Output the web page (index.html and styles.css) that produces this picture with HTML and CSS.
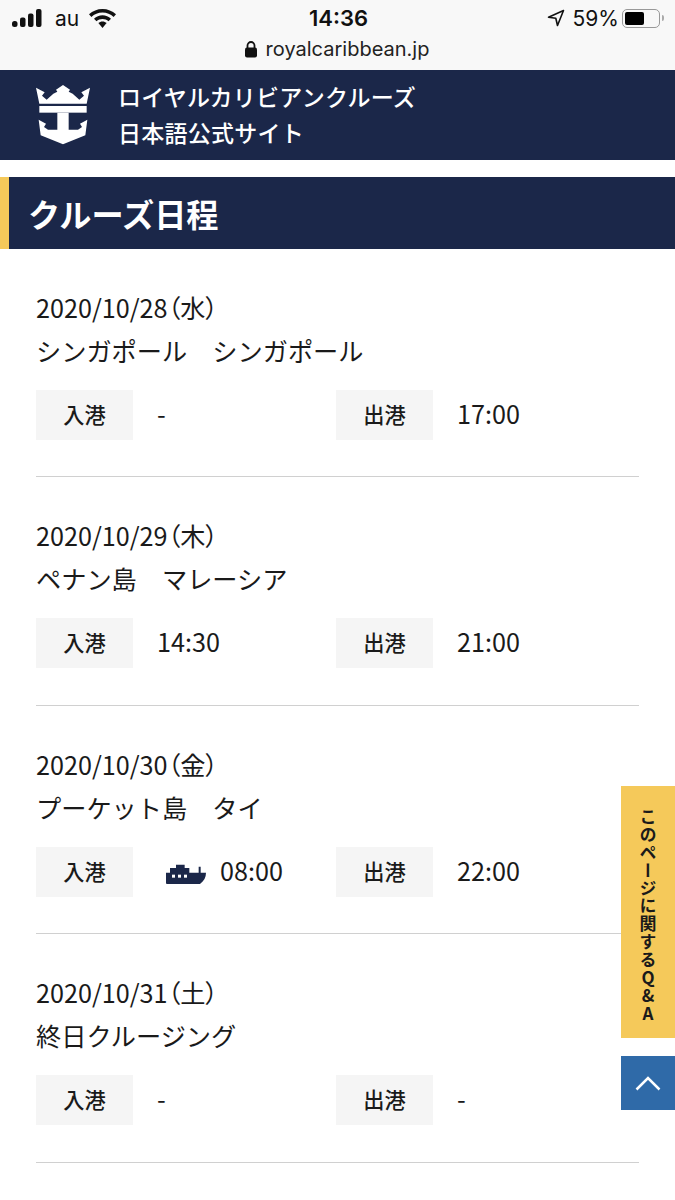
FILE: index.html
```html
<!DOCTYPE html>
<html lang="ja">
<head>
  <meta charset="UTF-8" />
  <meta name="viewport" content="width=device-width, initial-scale=1.0" />
  <title>クルーズ日程</title>
  <link rel="stylesheet" href="styles.css">
</head>
<body>
  <div class="browser-bar">
    <div class="status">
      <div class="status-left">
        <svg class="signal" width="30" height="18" viewBox="0 0 30 18">
          <rect x="0" y="12" width="5.5" height="6" rx="2.5" />
          <rect x="8" y="8.5" width="5.5" height="9.5" rx="2" />
          <rect x="16" y="4.5" width="5.5" height="13.500" rx="2" />
          <rect x="24" y="0" width="5.5" height="18" rx="2" />
        </svg>
        <span>au</span>
        <svg class="wifi" width="27" height="19" viewBox="0 0 27 19">
          <path d="M13.500 0C8.300 0 3.700 2 0 5.300L2.400 8C5.400 5.200 9.200 3.600 13.500 3.600S21.600 5.200 24.600 8L27 5.300C23.300 2 18.700 0 13.500 0Z" />
          <path d="M13.500 6.300C10.300 6.300 7.300 7.500 5 9.700L7.500 12.300C9.100 10.800 11.200 10 13.500 10S17.900 10.800 19.500 12.300L22 9.700C19.700 7.500 16.700 6.300 13.500 6.300Z" />
          <path d="M13.500 12.500C11.900 12.500 10.500 13.100 9.400 14.100L13.500 19L17.600 14.100C16.500 13.100 15.100 12.500 13.500 12.500Z" />
        </svg>
      </div>
      <div class="status-time">14:36</div>
      <div class="status-right">
        <svg class="locate" width="18" height="18" viewBox="0 0 18 18">
          <path d="M16.500 1.500L1.500 8.200L8.800 9.300L10.500 16.500Z" />
        </svg>
        <span>59%</span>
        <div class="battery"><div class="battery-level"></div></div>
      </div>
    </div>
    <div class="address">
      <svg width="14" height="17" viewBox="0 0 14 17">
        <path d="M3.500 7V4.500a3.500 3.500 0 0 1 7 0V7" fill="none" stroke="#111" stroke-width="1.800" />
        <rect x="1" y="6.500" width="12" height="10" rx="2" fill="#111" />
      </svg>
      <span>royalcaribbean.jp</span>
    </div>
  </div>

  <header class="site-header">
    <svg class="logo" width="54" height="60" viewBox="18 14 162 180">
      <path d="M18 22L44 36L36 46L50 58L70 40L82 34L78 28L99 14L120 28L116 34L128 40L148 58L162 46L154 36L180 22L170 70H28Z" />
      <rect x="28" y="77" width="142" height="20" />
      <path d="M26 118L48 130L42 140L54 148H82V97H116V148H144L156 140L150 130L172 118L166 165L99 192L32 165Z" />
    </svg>
    <div class="site-name">ロイヤルカリビアンクルーズ<br>日本語公式サイト</div>
  </header>

  <h1 class="page-title">クルーズ日程</h1>

  <div class="schedule">
    <div class="day">
      <div class="date">2020/10/28<span class="wday">（水）</span></div>
      <div class="place">シンガポール　シンガポール</div>
      <div class="times">
        <div class="time-cell"><div class="time-label">入港</div><div class="time-value">-</div></div>
        <div class="time-cell"><div class="time-label">出港</div><div class="time-value">17:00</div></div>
      </div>
    </div>
    <div class="day">
      <div class="date">2020/10/29<span class="wday">（木）</span></div>
      <div class="place">ペナン島　マレーシア</div>
      <div class="times">
        <div class="time-cell"><div class="time-label">入港</div><div class="time-value">14:30</div></div>
        <div class="time-cell"><div class="time-label">出港</div><div class="time-value">21:00</div></div>
      </div>
    </div>
    <div class="day">
      <div class="date">2020/10/30<span class="wday">（金）</span></div>
      <div class="place">プーケット島　タイ</div>
      <div class="times">
        <div class="time-cell">
          <div class="time-label">入港</div>
          <div class="time-value">
            <svg class="ship" width="40" height="24" viewBox="0 0 120 72">
              <path d="M30 14H56V24H70V38H98V20H104V38H120C120 52 114 62 102 72H3C1 72 0 71 0 69V38H12V24H30Z" />
              <rect x="18" y="44" width="9" height="9" fill="#fff" />
              <rect x="36" y="44" width="9" height="9" fill="#fff" />
              <rect x="54" y="44" width="9" height="9" fill="#fff" />
            </svg>
            <span>08:00</span>
          </div>
        </div>
        <div class="time-cell"><div class="time-label">出港</div><div class="time-value">22:00</div></div>
      </div>
    </div>
    <div class="day">
      <div class="date">2020/10/31<span class="wday">（土）</span></div>
      <div class="place">終日クルージング</div>
      <div class="times">
        <div class="time-cell"><div class="time-label">入港</div><div class="time-value">-</div></div>
        <div class="time-cell"><div class="time-label">出港</div><div class="time-value">-</div></div>
      </div>
    </div>
  </div>

  <a class="qa-tab">このページに関するQ&amp;A</a>
  <a class="top-btn">
    <svg width="26" height="16" viewBox="0 0 26 16">
      <path d="M1.500 14.500L13 3L24.500 14.500" fill="none" stroke="#fff" stroke-width="2.500" />
    </svg>
  </a>
</body>
</html>
```

FILE: styles.css
```css
body {
  font-family: "Noto Sans CJK JP", "Noto Sans", sans-serif;
  color: #1a1a1a;
  background: #fff;
  margin: 0;
  padding: 0;
  height: 1200px;
  overflow: hidden;
  position: relative;
}
.browser-bar {
  background: #f8f8f8;
  height: 70px;
  font-family: Inter, "Liberation Sans", sans-serif;
  color: #111;
}
.status {
  display: grid;
  grid-template-columns: 1fr auto 1fr;
  align-items: center;
  height: 36px;
  padding: 0 10px 0 12px;
  font-size: 21px;
}
.status-left {
  display: flex;
  align-items: center;
  gap: 13px;
}
.status-left svg {
  fill: #111;
}
.status-left .wifi {
  margin-left: -3px;
}
.status-time {
  font-size: 22px;
  font-weight: 600;
}
.status-right {
  display: flex;
  align-items: center;
  justify-content: flex-end;
  gap: 6px;
}
.locate {
  fill: none;
  stroke: #111;
  stroke-width: 1.600;
  stroke-linejoin: round;
  margin-right: 2px;
}
.battery {
  width: 38px;
  height: 19px;
  border: 1.500px solid #999;
  border-radius: 5px;
  padding: 2px;
  box-sizing: border-box;
  margin: 0 5px 0 -3px;
  position: relative;
}
.battery:after {
  content: "";
  position: absolute;
  right: -5px;
  top: 5px;
  width: 2px;
  height: 6px;
  background: #aaa;
  border-radius: 0 2px 2px 0;
}
.battery-level {
  width: 59%;
  height: 100%;
  background: #000;
  border-radius: 2px;
}
.address {
  display: flex;
  justify-content: center;
  align-items: center;
  gap: 8px;
  font-size: 20px;
  color: #222;
  height: 26px;
  padding-right: 2px;
}
.site-header {
  background: #1b2749;
  height: 90px;
  display: flex;
  align-items: center;
  padding-left: 36px;
  gap: 28px;
}
.logo {
  fill: #fff;
}
.site-name {
  color: #fff;
  font-size: 23px;
  font-weight: 500;
  letter-spacing: 0.250px;
  line-height: 36px;
  margin-top: -3px;
}
.page-title {
  margin: 17px 0 0;
  height: 72px;
  line-height: 72px;
  background: #1b2749;
  border-left: 9px solid #f5c95a;
  padding-left: 19px;
  color: #fff;
  font-size: 32.200px;
  font-weight: 700;
}
.schedule {
  padding: 0 36px;
}
.day {
  padding: 37px 0 36.400px;
  border-bottom: 1px solid #d0d0d0;
}
.date, .place {
  font-size: 25.200px;
  line-height: 43px;
}
.wday {
  font-feature-settings: "palt";
}
.times {
  display: grid;
  grid-template-columns: 300px 1fr;
  margin-top: 18px;
}
.time-cell {
  display: flex;
  align-items: center;
}
.time-label {
  width: 97px;
  height: 50px;
  line-height: 48px;
  background: #f5f5f5;
  text-align: center;
  font-size: 21.200px;
  font-weight: 500;
}
.time-value {
  display: flex;
  align-items: center;
  gap: 14px;
  padding: 0 0 4px 24px;
  font-size: 25.200px;
}
.ship {
  fill: #1b2749;
  margin-left: 9px;
  margin-top: 4px;
}
.qa-tab {
  position: absolute;
  right: 0;
  top: 786px;
  width: 54px;
  height: 252px;
  box-sizing: border-box;
  padding-top: 6px;
  background: #f5c95a;
  writing-mode: vertical-rl;
  text-orientation: upright;
  display: flex;
  align-items: center;
  justify-content: center;
  font-size: 17px;
  font-weight: 700;
  letter-spacing: 0.900px;
}
.top-btn {
  position: absolute;
  right: 0;
  top: 1056px;
  width: 54px;
  height: 54px;
  background: #2f6aa8;
  display: flex;
  align-items: center;
  justify-content: center;
}
```
